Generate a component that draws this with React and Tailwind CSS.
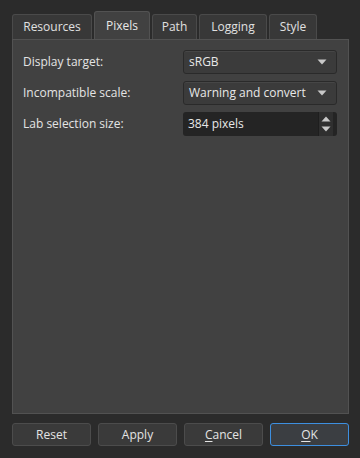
import React from 'react'

// ── Icons ──────────────────────────────────────────────────────────────────────

const ArrowDown = () => (
  <svg width="10" height="6" viewBox="0 0 10 6" aria-hidden="true">
    <path d="M0.5 0.5h9L5 5.5Z" fill="#c8c8c8" />
  </svg>
)

const SpinArrows = () => (
  <svg width="10" height="18" viewBox="0 0 10 18" aria-hidden="true">
    <path d="M0.5 6.5h9L5 1.5Z" fill="#c8c8c8" />
    <path d="M0.5 11.5h9L5 16.5Z" fill="#c8c8c8" />
  </svg>
)

const TABS = [
  { label: 'Resources', w: 'w-[80px]' },
  { label: 'Pixels', w: 'w-[56px]' },
  { label: 'Path', w: 'w-[45px]' },
  { label: 'Logging', w: 'w-[68px]' },
  { label: 'Style', w: 'w-[48px]' },
]

function Tab({ label, w, active }) {
  return (
    <div
      className={`flex items-center justify-center ${w} border border-b-0 rounded-t-[3px] ${
        active
          ? 'h-[28px] bg-[#414141] border-[#525252] text-[#e8e8e8]'
          : 'h-[25px] bg-[#383838] border-[#4a4a4a] text-[#e0e0e0]'
      }`}
    >
      {label}
    </div>
  )
}

function Combo({ value }) {
  return (
    <div className="w-[154px] h-[24px] flex items-center justify-between pl-[5px] pr-[9px] bg-[#3b3b3b] border border-[#2a2a2a] rounded-[3px] shadow-[inset_0_1px_0_#464646] text-[#e8e8e8]">
      <span>{value}</span>
      <ArrowDown />
    </div>
  )
}

function Spin({ value }) {
  return (
    <div className="w-[154px] h-[24px] flex items-center justify-between pl-[5px] pr-[4px] bg-[#242424] rounded-[3px] text-[#e8e8e8]">
      <span>{value}</span>
      <div className="h-full flex items-center px-[2px] bg-[#2f2f2f] border-l border-[#1e1e1e]">
        <SpinArrows />
      </div>
    </div>
  )
}

function Row({ label, children }) {
  return (
    <div className="flex items-center justify-between h-[24px]">
      <span className="text-[#e4e4e4]">{label}</span>
      {children}
    </div>
  )
}

function Button({ children, primary }) {
  return (
    <button
      className={`w-[79px] h-[23px] flex items-center justify-center rounded-[3px] bg-[#3a3a3a] text-[#e4e4e4] border ${
        primary ? 'border-[#3d8fe0] bg-[#3b3e42]' : 'border-[#4c4c4c]'
      }`}
    >
      {children}
    </button>
  )
}

export default function App() {
  return (
    <div
      className="w-[360px] h-[458px] bg-[#2b2b2b] flex flex-col px-[12px] pt-[12px] text-[12px]"
      style={{ fontFamily: '"Open Sans", "Noto Sans", sans-serif' }}
    >
      {/* Tabs */}
      <div className="flex items-end gap-[2px] h-[27px]">
        {TABS.map((t) => (
          <Tab key={t.label} label={t.label} w={t.w} active={t.label === 'Pixels'} />
        ))}
      </div>

      {/* Panel */}
      <div className="h-[375px] w-[337px] bg-[#414141] border border-[#525252] flex flex-col gap-[7px] pt-[10px] pl-[10px] pr-[11px]">
        <Row label="Display target:"><Combo value="sRGB" /></Row>
        <Row label="Incompatible scale:"><Combo value="Warning and convert" /></Row>
        <Row label="Lab selection size:"><Spin value="384 pixels" /></Row>
      </div>

      {/* Buttons */}
      <div className="flex justify-between mt-[9px] w-[337px]">
        <Button>Reset</Button>
        <Button>Apply</Button>
        <Button><span><span className="underline underline-offset-2">C</span>ancel</span></Button>
        <Button primary><span><span className="underline underline-offset-2">O</span>K</span></Button>
      </div>
    </div>
  )
}
